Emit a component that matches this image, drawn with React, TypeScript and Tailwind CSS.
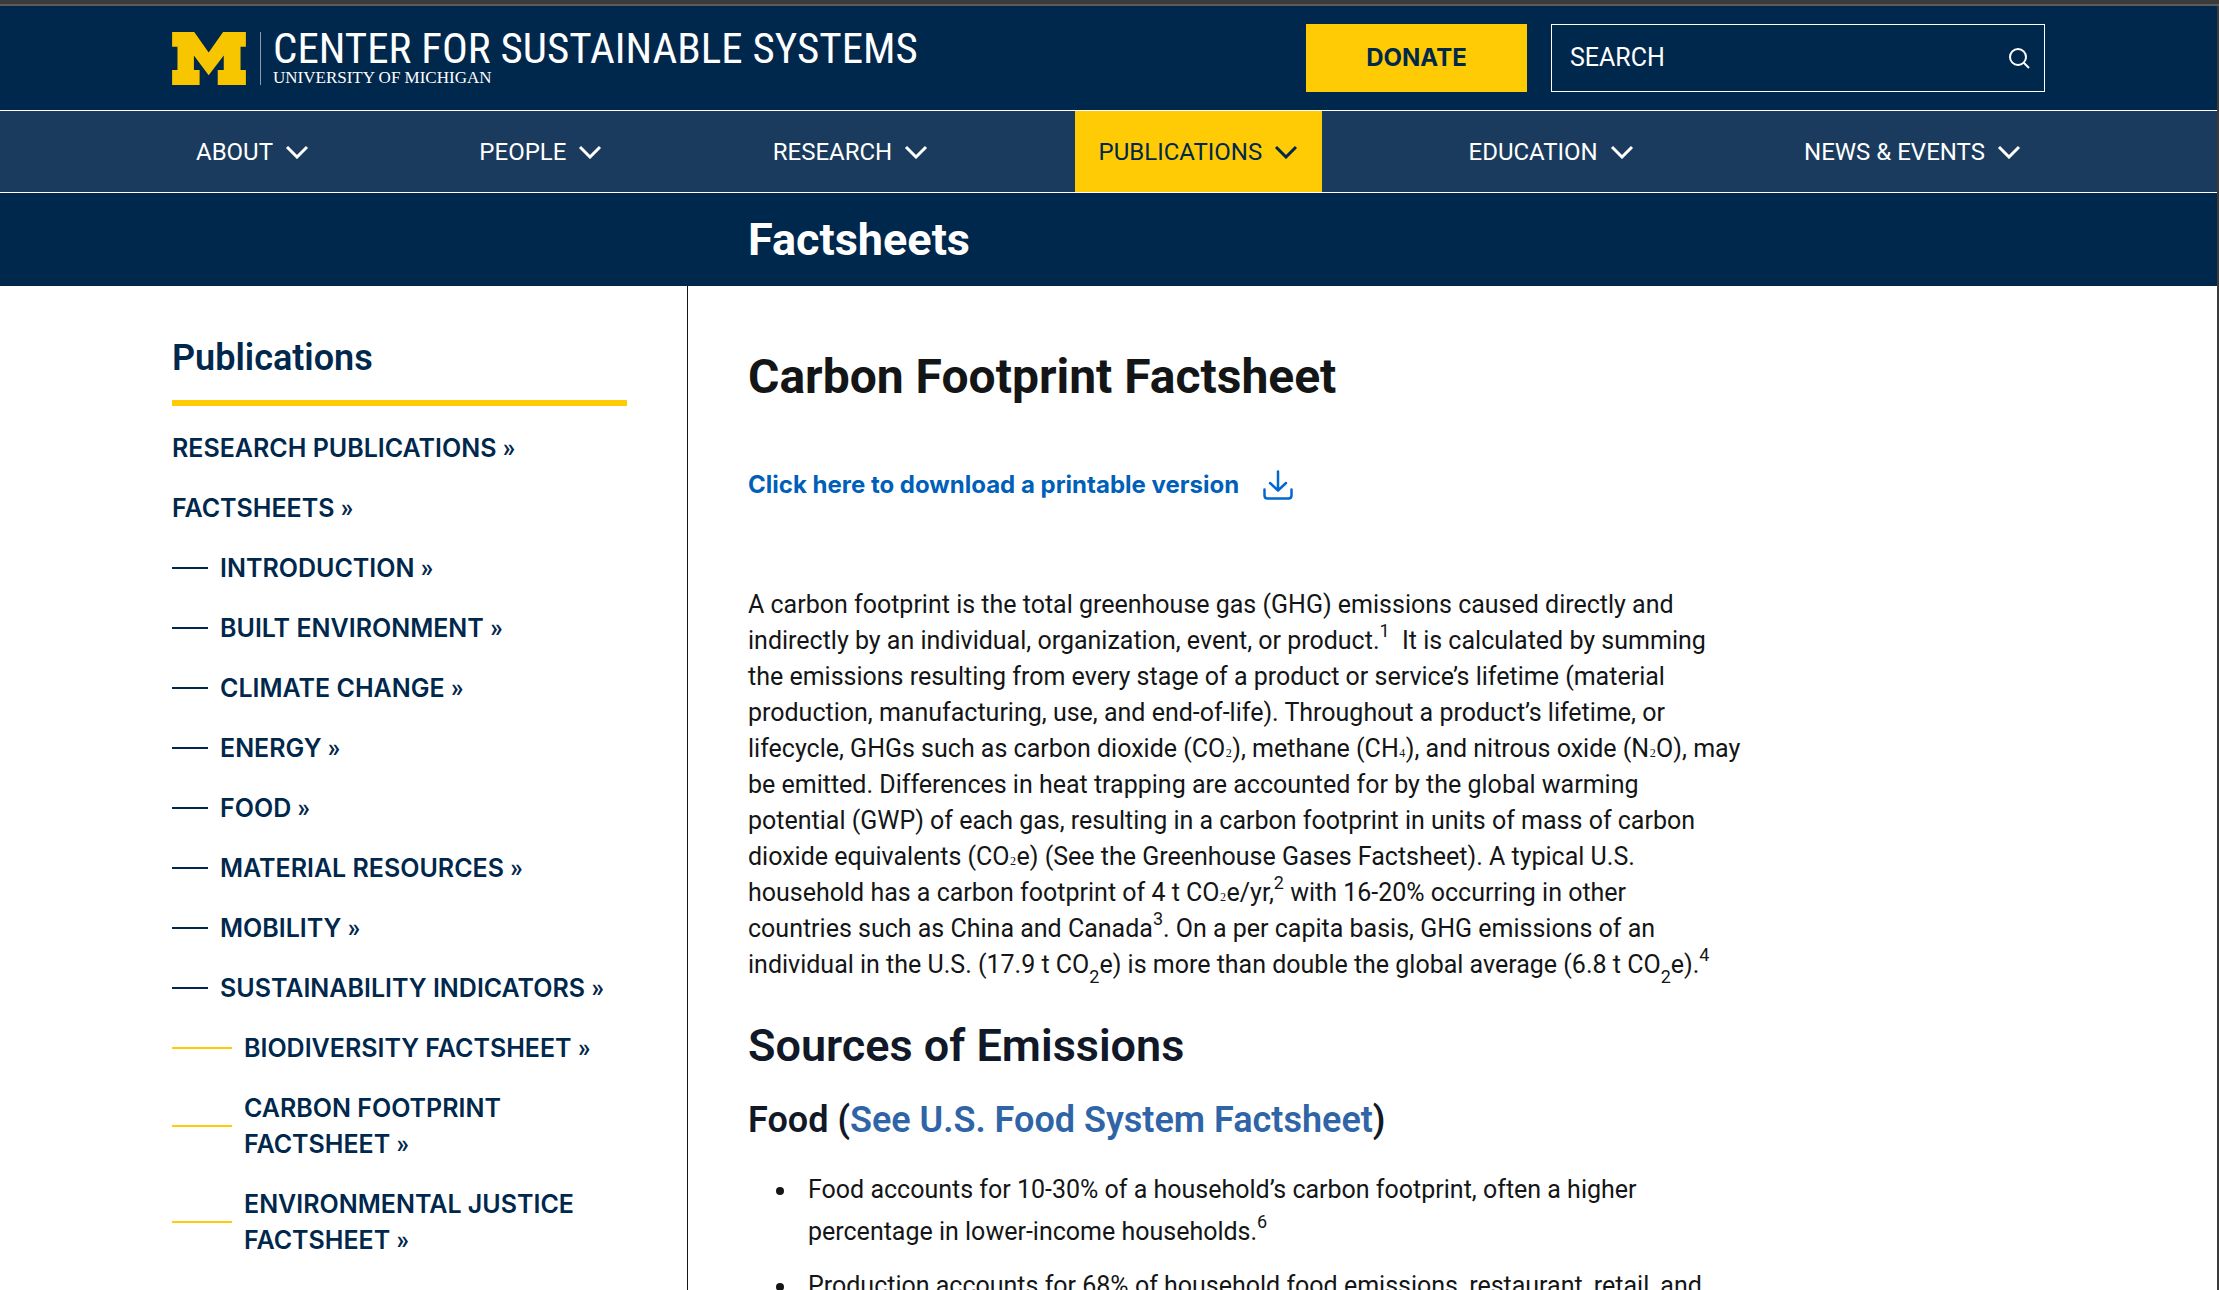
import type { ReactNode } from "react";

const navItems = ["ABOUT", "PEOPLE", "RESEARCH", "PUBLICATIONS", "EDUCATION", "NEWS & EVENTS"];

const sideLinks: { label: string; level: 0 | 1 | 2 }[] = [
  { label: "RESEARCH PUBLICATIONS", level: 0 },
  { label: "FACTSHEETS", level: 0 },
  { label: "INTRODUCTION", level: 1 },
  { label: "BUILT ENVIRONMENT", level: 1 },
  { label: "CLIMATE CHANGE", level: 1 },
  { label: "ENERGY", level: 1 },
  { label: "FOOD", level: 1 },
  { label: "MATERIAL RESOURCES", level: 1 },
  { label: "MOBILITY", level: 1 },
  { label: "SUSTAINABILITY INDICATORS", level: 1 },
  { label: "BIODIVERSITY FACTSHEET", level: 2 },
  { label: "CARBON FOOTPRINT FACTSHEET", level: 2 },
  { label: "ENVIRONMENTAL JUSTICE FACTSHEET", level: 2 },
];

function Chevron() {
  return (
    <svg width="24" height="14" viewBox="0 0 24 14" fill="none" stroke="currentColor" strokeWidth="3" aria-hidden="true">
      <path d="M2 2 L12 12 L22 2" />
    </svg>
  );
}

function Logo() {
  return (
    <a href="#" className="flex items-center text-white" aria-label="Center for Sustainable Systems, University of Michigan">
      <svg width="74" height="53" viewBox="0 0 220 158" aria-hidden="true">
        <path
          fill="#f7c600"
          d="M0 0H66L109 61L152 0H220V44H204V113H220V158H136V113H154V70L109 129L65 70V113H82V158H0V113H16V44H0Z"
        />
      </svg>
      <span className="ml-3.5 h-[53px] w-px bg-[#8b9bab]" />
      <span className="ml-3 flex flex-col">
        <span className="font-['Roboto_Condensed',sans-serif] text-[43px] leading-10 whitespace-nowrap">
          CENTER FOR SUSTAINABLE SYSTEMS
        </span>
        <span className="font-['Liberation_Serif',serif] text-[17px] leading-5 whitespace-nowrap">UNIVERSITY OF MICHIGAN</span>
      </span>
    </a>
  );
}

function Sup({ children }: { children: ReactNode }) {
  return <sup className="-top-3 text-lg leading-none">{children}</sup>;
}

function Sub({ children }: { children: ReactNode }) {
  return <sub className="top-2.5 bottom-auto text-lg leading-none">{children}</sub>;
}

function SmallSub({ children }: { children: ReactNode }) {
  return <span className="relative bottom-1 font-['Liberation_Serif',serif] text-xl leading-none">{children}</span>;
}

function Bullet({ children }: { children: ReactNode }) {
  return (
    <li className="flex gap-6">
      <span className="mt-[18px] size-2 shrink-0 rounded-full bg-[#131516]" />
      <div>{children}</div>
    </li>
  );
}

export default function App() {
  return (
    <div className="flex h-screen flex-col overflow-hidden bg-white font-[Roboto,sans-serif] text-[25px] leading-9 text-[#131516]">
      <div className="h-1.5 shrink-0 border-b-2 border-[#5c5c5c] bg-[#3b3b3b]" />
      <div className="flex grow flex-col border-r-2 border-[#3b3b3b]">
        <header className="bg-[#00274c] text-white">
          <div className="mx-auto flex max-w-[1873px] items-center py-[18px]">
            <Logo />
            <a
              href="#"
              className="ml-auto flex h-[68px] w-[221px] items-center justify-center bg-[#ffcb05] font-[Inter,sans-serif] text-2xl font-bold text-[#00274c]"
            >
              DONATE
            </a>
            <form className="ml-6 flex h-[68px] w-[494px] items-center border border-white pr-3.5 pl-[18px]">
              <input
                type="search"
                aria-label="Search"
                placeholder="SEARCH"
                className="min-w-0 grow bg-transparent text-white outline-none placeholder:text-white"
              />
              <button type="submit" aria-label="Submit search">
                <svg width="22" height="22" viewBox="0 0 22 22" fill="none" stroke="white" strokeWidth="2" aria-hidden="true">
                  <circle cx="10" cy="10" r="8" />
                  <path d="M15.5 15.5L21 21" />
                </svg>
              </button>
            </form>
          </div>
          <nav className="border-y border-white bg-[#1a3b5d] text-2xl">
            <ul className="mx-auto flex max-w-[1873px] justify-between">
              {navItems.map((item) => (
                <li key={item}>
                  <button
                    className={
                      item === "PUBLICATIONS"
                        ? "flex h-[81px] items-center gap-3 bg-[#ffcb05] px-6 text-[#00274c]"
                        : "flex h-[81px] items-center gap-3 px-6"
                    }
                  >
                    {item}
                    <Chevron />
                  </button>
                </li>
              ))}
            </ul>
          </nav>
          <div className="mx-auto max-w-[1873px]">
            <div className="ml-[576px] py-5 text-[45px] leading-[53px] font-bold">Factsheets</div>
          </div>
        </header>

        <div className="mx-auto flex w-full max-w-[1873px] grow">
          <aside className="w-[516px] shrink-0 border-r border-[#131516] pr-[60px] font-[Inter,sans-serif] font-semibold text-[#00274c]">
            <h2 className="border-b-[6px] border-[#ffcb05] pt-[49px] pb-[19px] font-[Roboto,sans-serif] text-4xl leading-[46px]">
              Publications
            </h2>
            <ul className="mt-6 flex flex-col gap-6">
              {sideLinks.map(({ label, level }) => (
                <li key={label} className="flex items-center gap-3">
                  {level === 1 && <span className="h-0.5 w-9 shrink-0 bg-[#00274c]" />}
                  {level === 2 && <span className="h-0.5 w-[60px] shrink-0 bg-[#ffcb05]" />}
                  <a href="#">
                    {label} <span className="font-[Roboto,sans-serif] leading-none">»</span>
                  </a>
                </li>
              ))}
            </ul>
          </aside>

          <main className="pt-[61px] pl-[60px]">
            <h1 className="text-5xl leading-[60px] font-bold">Carbon Footprint Factsheet</h1>
            <a href="#" className="mt-[60px] flex items-center gap-6 font-[Inter,sans-serif] text-2xl leading-9 font-bold text-[#005fb8]">
              Click here to download a printable version
              <svg
                width="30"
                height="30"
                viewBox="0 0 30 30"
                fill="none"
                stroke="#0068d0"
                strokeWidth="2.5"
                strokeLinecap="round"
                strokeLinejoin="round"
                aria-hidden="true"
              >
                <path d="M15 1.5V20M7 13L15 20.5L23 13" />
                <path d="M1.5 19.5V25.5Q1.5 28.5 4.5 28.5H25.5Q28.5 28.5 28.5 25.5V19.5" />
              </svg>
            </a>
            <p className="mt-[84px] whitespace-nowrap">
              A carbon footprint is the total greenhouse gas (GHG) emissions caused directly and
              <br />
              indirectly by an individual, organization, event, or product.<Sup>1</Sup>&nbsp; It is calculated by summing
              <br />
              the emissions resulting from every stage of a product or service’s lifetime (material
              <br />
              production, manufacturing, use, and end-of-life). Throughout a product’s lifetime, or
              <br />
              lifecycle, GHGs such as carbon dioxide (CO<SmallSub>₂</SmallSub>), methane (CH<SmallSub>₄</SmallSub>), and nitrous oxide (N
              <SmallSub>₂</SmallSub>O), may
              <br />
              be emitted. Differences in heat trapping are accounted for by the global warming
              <br />
              potential (GWP) of each gas, resulting in a carbon footprint in units of mass of carbon
              <br />
              dioxide equivalents (CO<SmallSub>₂</SmallSub>e) (See the Greenhouse Gases Factsheet). A typical U.S.
              <br />
              household has a carbon footprint of 4 t CO<SmallSub>₂</SmallSub>e/yr,<Sup>2</Sup> with 16-20% occurring in other
              <br />
              countries such as China and Canada<Sup>3</Sup>. On a per capita basis, GHG emissions of an
              <br />
              individual in the U.S. (17.9 t CO<Sub>2</Sub>e) is more than double the global average (6.8 t CO<Sub>2</Sub>e).<Sup>4</Sup>
            </p>
            <h2 className="mt-9 text-[45px] leading-[54px] font-semibold text-[#111827]">Sources of Emissions</h2>
            <h3 className="mt-6 text-4xl leading-[46px] font-semibold text-[#111827]">
              Food (<a href="#" className="text-[#2f65a7]">See U.S. Food System Factsheet</a>)
            </h3>
            <ul className="mt-[26px] flex flex-col gap-3 pl-7 leading-[42px] whitespace-nowrap">
              <Bullet>
                Food accounts for 10-30% of a household’s carbon footprint, often a higher
                <br />
                percentage in lower-income households.<Sup>6</Sup>
              </Bullet>
              <Bullet>Production accounts for 68% of household food emissions, restaurant, retail, and</Bullet>
            </ul>
          </main>
        </div>
      </div>
    </div>
  );
}
